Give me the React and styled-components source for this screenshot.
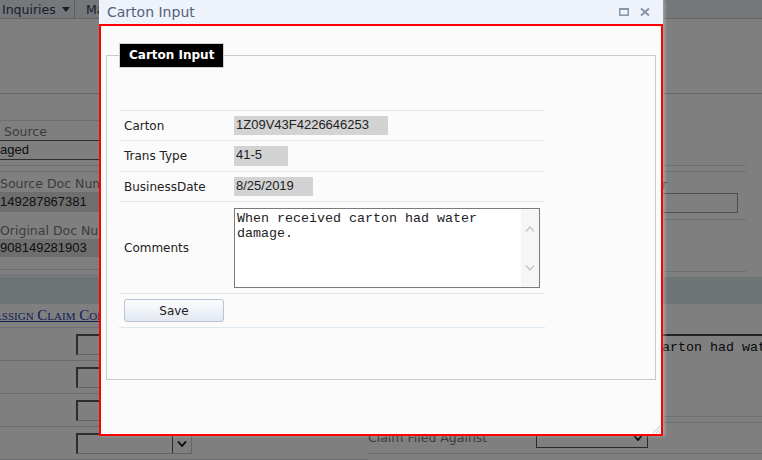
import styled, { createGlobalStyle } from "styled-components";

const GlobalStyle = createGlobalStyle`
  html, body {
    margin: 0;
    padding: 0;
    background: #fff;
    overflow: hidden;
  }
  body {
    width: 762px;
    height: 460px;
    font-family: "DejaVu Sans", Verdana, sans-serif;
  }
`;

// ---- page behind the modal ----
const Page = styled.div`
  position: relative;
  width: 762px;
  height: 460px;
  overflow: hidden;
  background: #fff;
`;

const NavBar = styled.div`
  display: flex;
  height: 18px;
  background: #eceef6;
  border-bottom: 1px solid #c9cbd1;
`;

const NavItem = styled.div`
  display: flex;
  align-items: center;
  gap: 6px;
  padding: 0 6px 0 2px;
  width: ${(p) => p.$w || "auto"};
  font-size: 12.5px;
  color: #2e3d55;
  border-right: 1px solid #b9bcc4;
  white-space: nowrap;
  & + & {
    padding-left: 11px;
    border-right: none;
  }
`;

const Caret = styled.span`
  width: 0;
  height: 0;
  border-left: 4px solid transparent;
  border-right: 4px solid transparent;
  border-top: 5px solid #2e3d55;
`;

const Header = styled.div`
  height: 74px;
  border-bottom: 1px solid #cccccc;
`;

const TopSection = styled.div`
  display: flex;
  justify-content: space-between;
  height: 183px;
`;

const FieldColumn = styled.div`
  width: ${(p) => p.$w};
  flex-shrink: 0;
  margin-right: ${(p) => p.$mr || "0"};
  padding-top: ${(p) => p.$pt};
  display: flex;
  flex-direction: column;
`;

const Rule = styled.div`
  border-top: 1px solid #d6e0e8;
  margin-top: ${(p) => p.$mt || "0"};
`;

const DoubleRule = styled.div`
  height: 5px;
  border-top: 1px solid #d6e0e8;
  border-bottom: 1px solid #d6e0e8;
  margin-top: ${(p) => p.$mt || "0"};
`;

const BgLabel = styled.div`
  height: ${(p) => p.$h};
  width: ${(p) => p.$w || "auto"};
  flex-shrink: 0;
  display: flex;
  align-items: flex-end;
  padding-left: ${(p) => p.$pl || "0"};
  font-size: 12.5px;
  line-height: 16px;
  color: #787878;
  white-space: nowrap;
`;

const BgValue = styled.div`
  height: ${(p) => p.$h};
  line-height: ${(p) => p.$h};
  font-family: "Liberation Sans", Arial, sans-serif;
  font-size: 13px;
  color: #222;
  white-space: nowrap;
  background: ${(p) => (p.$shaded ? "#dcdcdc" : "transparent")};
  border-top: ${(p) => (p.$outlined ? "1px solid #5c5c5c" : "none")};
  border-bottom: ${(p) => (p.$outlined ? "1px solid #5c5c5c" : "none")};
`;

const BgInput = styled.div`
  width: 79px;
  height: 18px;
  margin-left: 40px;
  border: 1px solid #9a9a9a;
`;

const Band = styled.div`
  height: 27px;
  background: #dde9ec;
`;

const BottomSection = styled.div`
  display: flex;
  height: 155px;
`;

const BottomLeft = styled.div`
  width: 368px;
  flex-shrink: 0;
`;

const LinkRow = styled.div`
  height: 23px;
  border-bottom: 1px solid #d6e0e8;
  display: flex;
  align-items: center;
  overflow: hidden;
`;

const SmallCapsLink = styled.a`
  margin-left: -9px;
  font-family: "Liberation Serif", "Times New Roman", serif;
  font-size: 15px;
  font-variant: small-caps;
  color: #2340b0;
  text-decoration: underline;
  white-space: nowrap;
`;

const InputRow = styled.div`
  height: 32px;
  border-bottom: 1px solid #cfd9e2;
  display: flex;
  align-items: center;
  padding-left: 76px;
`;

const InsetBox = styled.div`
  width: ${(p) => p.$w || "60px"};
  height: 18px;
  border-top: 2px solid #5a5a5a;
  border-left: 2px solid #5a5a5a;
  border-right: 1px solid #c8c8c8;
  border-bottom: 1px solid #c8c8c8;
  display: flex;
  justify-content: flex-end;
`;

const SelectButton = styled.div`
  width: 18px;
  height: 18px;
  border-left: 1px solid #555;
  display: flex;
  align-items: center;
  justify-content: center;
`;

const BottomRight = styled.div`
  flex: 1;
  min-width: 0;
  padding-top: 30px;
`;

const BgComments = styled.div`
  margin-left: 170px;
  height: 69px;
  border-top: 2px solid #444;
  padding: 4px 0 0 4px;
  font-family: "Liberation Mono", "Courier New", monospace;
  font-size: 13.33px;
  color: #111;
  white-space: nowrap;
  overflow: hidden;
`;

const BgFieldRow = styled.div`
  height: 30px;
  border-bottom: 1px solid #cfd9e2;
  display: flex;
  align-items: center;
`;

const BgSelect = styled.div`
  width: 106px;
  height: 18px;
  margin-left: 40px;
  border: 1px solid #555;
  display: flex;
  justify-content: flex-end;
  align-items: center;
  padding-right: 4px;
`;

const Overlay = styled.div`
  position: absolute;
  inset: 0;
  background: rgba(0, 0, 0, 0.5);
`;

// ---- modal dialog ----
const Dialog = styled.div`
  position: absolute;
  left: 99px;
  top: 0;
  width: 564px;
  height: 436px;
  display: flex;
  flex-direction: column;
  box-shadow: 2px 0 3px rgba(210, 210, 210, 0.45);
`;

const TitleBar = styled.div`
  height: 24px;
  flex-shrink: 0;
  display: flex;
  align-items: center;
  padding: 0 13px 0 8px;
  background: #eef2fa;
`;

const Title = styled.div`
  font-size: 14px;
  color: #52617e;
`;

const TitleIcons = styled.div`
  margin-left: auto;
  display: flex;
  align-items: center;
  gap: 11px;
`;

const Body = styled.div`
  position: relative;
  flex: 1;
  border: 2px solid #ff0000;
  background: #fbfbfb;
  padding: 17px 5px 54px 5px;
  display: flex;
`;

const Fieldset = styled.fieldset`
  flex: 1;
  margin: 0;
  padding: 0 12px;
  border: 1px solid #c9c9c9;
  min-width: 0;
`;

const Legend = styled.legend`
  height: 23px;
  line-height: 23px;
  padding: 0 9px;
  background: #000;
  border: 1px solid #cfcfcf;
  color: #fff;
  font-size: 12px;
  font-weight: bold;
`;

const FormTable = styled.div`
  width: 426px;
  margin-top: 42px;
  border-top: 1px solid #dce7ef;
`;

const FormRow = styled.div`
  display: flex;
  align-items: center;
  height: ${(p) => p.$h};
  border-bottom: 1px solid #dce7ef;
`;

const FieldLabel = styled.div`
  width: 110px;
  padding-left: 5px;
  font-size: 12px;
  color: #222;
`;

const ReadOnlyBox = styled.div`
  width: ${(p) => p.$w};
  height: ${(p) => p.$h || "19px"};
  box-sizing: border-box;
  padding: 0 2px;
  background: #d3d3d3;
  font-family: "Liberation Sans", Arial, sans-serif;
  font-size: 13px;
  line-height: 17px;
  color: #222;
`;

const CommentsBox = styled.div`
  width: 306px;
  height: 80px;
  box-sizing: border-box;
  border: 1px solid #7a7a7a;
  background: #fff;
  display: flex;
`;

const CommentsText = styled.textarea`
  flex: 1;
  border: none;
  outline: none;
  resize: none;
  overflow: hidden;
  margin: 0;
  padding: 2px 2px;
  background: #fff;
  font-family: "Liberation Mono", "Courier New", monospace;
  font-size: 13.33px;
  line-height: 15px;
  color: #222;
`;

const ScrollTrack = styled.div`
  width: 18px;
  background: #f6f6f6;
  display: flex;
  flex-direction: column;
  justify-content: space-between;
  align-items: center;
  padding: 17px 0 16px;
`;

const SaveButton = styled.button`
  width: 100px;
  height: 23px;
  margin-left: 5px;
  padding: 0;
  border: 1px solid #b8c3d3;
  border-radius: 3px;
  background: linear-gradient(#fdfdfe, #e2e8f2);
  font-family: "DejaVu Sans", Verdana, sans-serif;
  font-size: 12px;
  color: #222;
`;

const ResizeGrip = styled.svg`
  position: absolute;
  right: 1px;
  bottom: 1px;
`;

const Chevron = ({ up, color = "#c4c4c4", w = 10, h = 6, sw = 1.2 }) => (
  <svg width={w} height={h} viewBox="0 0 10 6">
    <path
      d={up ? "M1 5.5 L5 1 L9 5.5" : "M1 0.5 L5 5 L9 0.5"}
      fill="none"
      stroke={color}
      strokeWidth={sw}
    />
  </svg>
);

export default function App() {
  return (
    <>
      <GlobalStyle />
      <Page>
        <NavBar>
          <NavItem $w="66px">
            Inquiries <Caret />
          </NavItem>
          <NavItem>Manage</NavItem>
        </NavBar>
        <Header />

        <TopSection>
          <FieldColumn $w="99px" $pt="26px">
            <Rule />
            <BgLabel $h="19px" $pl="4px">Source</BgLabel>
            <BgValue $h="18px" $outlined>aged</BgValue>
            <DoubleRule $mt="5px" />
            <BgLabel $h="20px">Source Doc Num</BgLabel>
            <BgValue $h="20px" $shaded>149287867381</BgValue>
            <BgLabel $h="27px">Original Doc Num</BgLabel>
            <BgValue $h="18px" $shaded>908149281903</BgValue>
            <DoubleRule $mt="12px" />
          </FieldColumn>
          <FieldColumn $w="129px" $mr="16px" $pt="71px">
            <DoubleRule />
            <BgLabel $h="21px">Number</BgLabel>
            <BgInput />
            <Rule $mt="6px" />
            <Rule $mt="51px" />
          </FieldColumn>
        </TopSection>
        <Band />

        <BottomSection>
          <BottomLeft>
            <LinkRow>
              <SmallCapsLink>Assign Claim Code</SmallCapsLink>
            </LinkRow>
            <InputRow>
              <InsetBox />
            </InputRow>
            <InputRow>
              <InsetBox />
            </InputRow>
            <InputRow>
              <InsetBox />
            </InputRow>
            <InputRow>
              <InsetBox $w="113px">
                <SelectButton>
                  <Chevron color="#111" sw={1.8} />
                </SelectButton>
              </InsetBox>
            </InputRow>
          </BottomLeft>
          <BottomRight>
            <BgComments>When received carton had water damage.</BgComments>
            <DoubleRule $mt="7px" />
            <BgFieldRow>
              <BgLabel $h="16px" $w="128px">
                Claim Filed Against
              </BgLabel>
              <BgSelect>
                <Chevron color="#111" sw={1.8} />
              </BgSelect>
            </BgFieldRow>
          </BottomRight>
        </BottomSection>

        <Overlay />

        <Dialog>
          <TitleBar>
            <Title>Carton Input</Title>
            <TitleIcons>
              <svg width="10" height="8" viewBox="0 0 10 8">
                <rect x="0.75" y="1" width="8.5" height="6.25" fill="none" stroke="#8995ab" strokeWidth="1.5" />
                <rect x="0" y="0" width="10" height="2" fill="#8995ab" />
              </svg>
              <svg width="10" height="8" viewBox="0 0 10 8">
                <path d="M1 0.5 L9 7.5 M9 0.5 L1 7.5" stroke="#8995ab" strokeWidth="2" />
              </svg>
            </TitleIcons>
          </TitleBar>
          <Body>
            <Fieldset>
              <Legend>Carton Input</Legend>
              <FormTable>
                <FormRow $h="29px">
                  <FieldLabel>Carton</FieldLabel>
                  <ReadOnlyBox $w="154px">1Z09V43F4226646253</ReadOnlyBox>
                </FormRow>
                <FormRow $h="30px">
                  <FieldLabel>Trans Type</FieldLabel>
                  <ReadOnlyBox $w="54px" $h="20px">41-5</ReadOnlyBox>
                </FormRow>
                <FormRow $h="29px">
                  <FieldLabel>BusinessDate</FieldLabel>
                  <ReadOnlyBox $w="79px">8/25/2019</ReadOnlyBox>
                </FormRow>
                <FormRow $h="91px">
                  <FieldLabel>Comments</FieldLabel>
                  <CommentsBox>
                    <CommentsText readOnly value="When received carton had water damage." />
                    <ScrollTrack>
                      <Chevron up />
                      <Chevron />
                    </ScrollTrack>
                  </CommentsBox>
                </FormRow>
                <FormRow $h="33px">
                  <SaveButton>Save</SaveButton>
                </FormRow>
              </FormTable>
            </Fieldset>
            <ResizeGrip width="8" height="8" viewBox="0 0 8 8">
              <path d="M8 1 L1 8 M8 4 L4 8 M8 7 L7 8" stroke="#c2c8d2" strokeWidth="1" />
            </ResizeGrip>
          </Body>
        </Dialog>
      </Page>
    </>
  );
}
